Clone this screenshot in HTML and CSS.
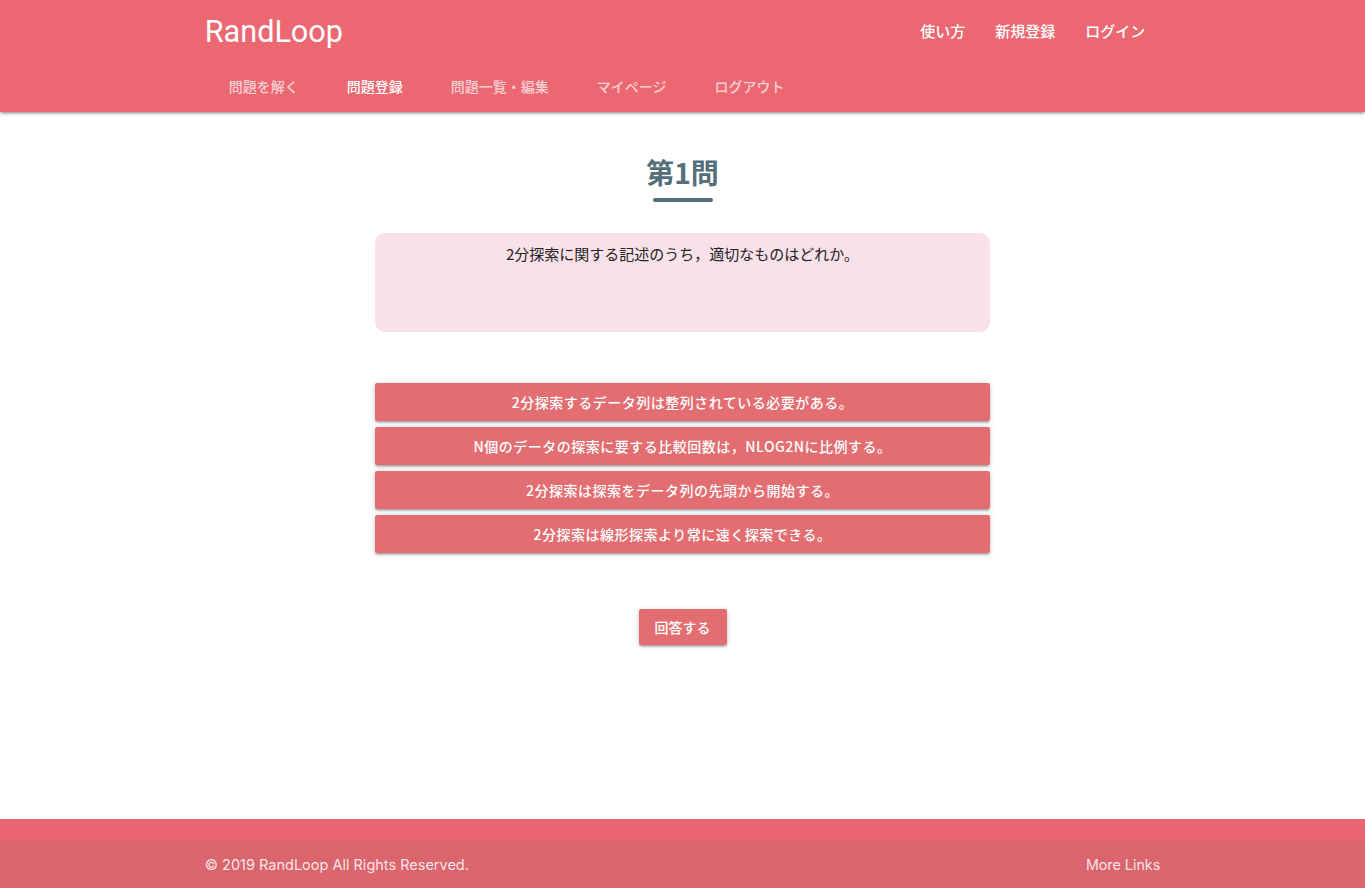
FILE: index.html
```html
<!DOCTYPE html>
<html lang="ja">
<head>
<meta charset="utf-8">
<title>RandLoop</title>
<link rel="stylesheet" href="styles.css">
</head>
<body>
<header class="navbar">
  <div class="container">
    <div class="nav-top">
      <a class="brand" href="#">RandLoop</a>
      <ul class="nav-right">
        <li><a href="#">使い方</a></li>
        <li><a href="#">新規登録</a></li>
        <li><a href="#">ログイン</a></li>
      </ul>
    </div>
    <ul class="tabs">
      <li class="tab"><a href="#">問題を解く</a></li>
      <li class="tab active"><a href="#">問題登録</a></li>
      <li class="tab"><a href="#">問題一覧・編集</a></li>
      <li class="tab"><a href="#">マイページ</a></li>
      <li class="tab"><a href="#">ログアウト</a></li>
    </ul>
  </div>
</header>

<main class="main">
  <h1 class="title">第1問</h1>
  <div class="title-bar"></div>
  <div class="question">2分探索に関する記述のうち，適切なものはどれか。</div>
  <div class="choices">
    <button class="btn choice">2分探索するデータ列は整列されている必要がある。</button>
    <button class="btn choice">N個のデータの探索に要する比較回数は，nlog2nに比例する。</button>
    <button class="btn choice">2分探索は探索をデータ列の先頭から開始する。</button>
    <button class="btn choice">2分探索は線形探索より常に速く探索できる。</button>
  </div>
  <button class="btn submit">回答する</button>
</main>

<footer class="footer">
  <div class="footer-top"></div>
  <div class="footer-copy">
    <div class="container footer-row">
      <span>© 2019 RandLoop All Rights Reserved.</span>
      <a class="more" href="#">More Links</a>
    </div>
  </div>
</footer>
</body>
</html>
```

FILE: styles.css
```css
* { box-sizing: border-box; }
html, body { margin: 0; padding: 0; }
body {
  font-family: Roboto, "Noto Sans CJK JP", sans-serif;
  min-height: 100vh;
  display: flex;
  flex-direction: column;
  background: #fff;
  color: #222;
}
a { text-decoration: none; color: inherit; }
ul { list-style: none; margin: 0; padding: 0; }

.container {
  width: 70%;
  margin: 0 auto;
}

.navbar {
  background: #eb6872;
  color: #fff;
  height: 112px;
  box-shadow: 0 2px 2px 0 rgba(0,0,0,0.14), 0 3px 1px -2px rgba(0,0,0,0.12), 0 1px 5px 0 rgba(0,0,0,0.2);
  position: relative;
  z-index: 2;
}
.nav-top {
  height: 64px;
  display: flex;
  align-items: center;
  justify-content: space-between;
}
.brand {
  font-size: 30.6px;
  font-family: Roboto, "Noto Sans CJK JP", sans-serif;
  line-height: 62px;
}
.nav-right {
  display: flex;
  height: 64px;
}
.nav-right a {
  display: block;
  padding: 0 15px;
  line-height: 62px;
  font-size: 15px;
  font-family: "Noto Sans CJK JP", sans-serif;
  font-weight: 500;
}
.tabs {
  display: flex;
  height: 48px;
}
.tab a {
  display: block;
  padding: 0 24px;
  line-height: 44px;
  font-size: 14px;
  font-family: "Noto Sans CJK JP", sans-serif;
  font-weight: 500;
  color: rgba(255,255,255,0.7);
}
.tab.active a { color: #fff; }

.main {
  flex: 1;
  display: flex;
  flex-direction: column;
  align-items: center;
  padding-top: 40px;
}
.title {
  margin: 0;
  font-family: "Noto Sans CJK JP", sans-serif;
  font-size: 28px;
  font-weight: 700;
  line-height: 40px;
  color: #546e7a;
}
.title-bar {
  width: 60px;
  height: 4px;
  border-radius: 2px;
  background: #546e7a;
  margin-top: 6px;
}
.question {
  width: 45%;
  margin-top: 31px;
  height: 99px;
  background: #f9e1e9;
  border-radius: 10px;
  padding-top: 10px;
  text-align: center;
  font-family: "Noto Sans CJK JP", sans-serif;
  font-size: 15px;
  line-height: 22px;
  color: #222;
}
.choices {
  width: 45%;
  margin-top: 51px;
  display: flex;
  flex-direction: column;
  gap: 6px;
}
.btn {
  border: none;
  border-radius: 2px;
  background: #e36e72;
  color: #fff;
  font-family: "Noto Sans CJK JP", sans-serif;
  font-size: 14px;
  font-weight: 500;
  letter-spacing: 0.5px;
  text-transform: uppercase;
  box-shadow: 0 2px 2px 0 rgba(0,0,0,0.14), 0 3px 1px -2px rgba(0,0,0,0.12), 0 1px 5px 0 rgba(0,0,0,0.2);
  cursor: pointer;
}
.choice {
  width: 100%;
  height: 38px;
  line-height: 38px;
  padding: 0 16px;
}
.submit {
  margin-top: 56px;
  height: 36px;
  padding: 0 16px;
  letter-spacing: 0;
}

.footer {
  color: rgba(255,255,255,0.85);
}
.footer-top {
  height: 21px;
  background: #ea6771;
}
.footer-copy {
  height: 48px;
  background: #da656d;
}
.footer-row {
  height: 48px;
  display: flex;
  align-items: center;
  justify-content: space-between;
  font-size: 14.5px;
  font-family: Inter, Roboto, sans-serif;
}
.more { font-size: 14.3px; }
```
